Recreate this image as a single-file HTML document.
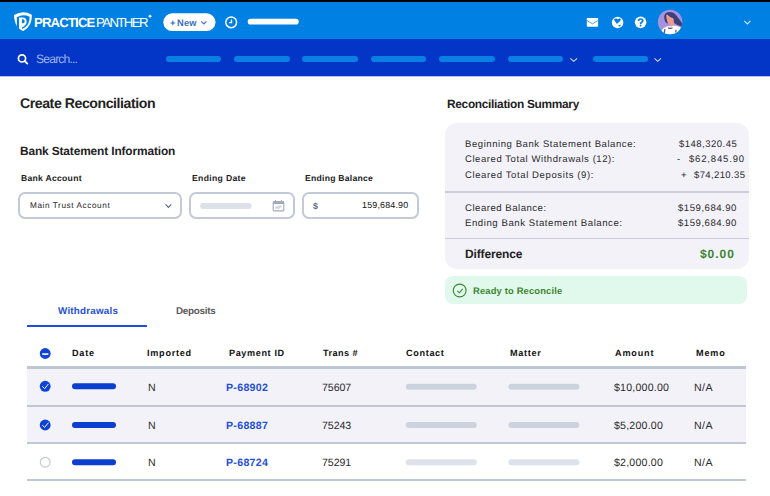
<!DOCTYPE html>
<html><head><meta charset="utf-8">
<style>
*{margin:0;padding:0;box-sizing:border-box}
html,body{width:770px;height:496px;overflow:hidden;background:#fff;font-family:"Liberation Sans",sans-serif;color:#222}
.abs{position:absolute}
.t{position:absolute;white-space:nowrap;line-height:1;text-rendering:geometricPrecision}
.pill{position:absolute;top:56px;height:6px;border-radius:3px;background:#0A80E4;width:55.5px}
.inp{position:absolute;top:192px;height:26.5px;border:2px solid #C3C9D7;border-radius:7px;background:#fff}
.bar{position:absolute;height:6px;border-radius:3px}
.rb{position:absolute;left:27px;width:719px}
</style></head><body>
<div class="abs" style="left:0;top:0;width:770px;height:1px;background:#000"></div>
<div class="abs" style="left:0;top:1px;width:770px;height:1px;background:#000"></div>
<div class="abs" style="left:0;top:2px;width:770px;height:37px;background:#0080E3"></div>
<div class="abs" style="left:0;top:39px;width:770px;height:37px;background:#0335C6"></div>
<div class="abs" style="left:0;top:76px;width:770px;height:1px;background:#B4C2EE"></div>

<svg class="abs" style="left:0;top:0" width="770" height="80" viewBox="0 0 770 80">
 <!-- logo -->
 <path d="M14 15.1 Q23 9.6 31.8 14.7 C32 20.5 30.5 27.3 23.1 31 C21.2 30.1 19.8 29.3 19 28.5 L16.6 26.2 C15 22.5 14 18.5 14 15.1 Z" fill="#fff"/>
 <path d="M16.8 17.2 Q23 13.6 29.6 16.7 C29.6 21.8 28.2 26 22.5 28.8 L19 28.8 L16.3 26.5 L16.9 24 Z" fill="#0080E3"/>
 <path d="M19 17.6 L22.6 17.6 C25.1 17.6 26.7 19.4 26.7 21.6 C26.7 24.2 24.6 26.6 21.9 27.4 L21.9 29.8 L19 28.4 Z M21.9 19.3 L22.9 19.3 C23.9 19.3 24.7 20.1 24.7 21.2 C24.7 22.4 23.9 23.3 22.9 23.3 L21.9 23.3 Z" fill="#fff" fill-rule="evenodd"/>
 <circle cx="150" cy="16.3" r="1.45" fill="#fff" opacity="0.85"/>
 <!-- new pill -->
 <rect x="163.3" y="13.3" width="52.2" height="17.8" rx="8.9" fill="#fff"/>
 <path d="M201.2 21.4 L203.85 24 L206.5 21.4" stroke="#3A6FC4" stroke-width="1.1" fill="none"/>
 <!-- clock -->
 <circle cx="231.2" cy="22.3" r="5.4" stroke="#fff" stroke-width="1.45" fill="none"/>
 <path d="M231.5 19.4 L231.5 22.7 L229.2 22.7" stroke="#fff" stroke-width="1.3" fill="none"/>
 <rect x="247.7" y="18.8" width="51" height="5.7" rx="2.85" fill="#fff"/>
 <!-- mail -->
 <rect x="586.8" y="18" width="11.3" height="8.7" rx="0.6" fill="#fff"/>
 <path d="M587 20.6 L592.45 23.8 L597.9 20.6" stroke="#4FA3EC" stroke-width="1" fill="none"/>
 <!-- globe -->
 <circle cx="617.6" cy="22.45" r="5.75" fill="#fff"/>
 <path d="M614.1 19.3 C614.6 18.3 616.1 18.1 617 18.8 L617.9 19.3 C618.5 18.5 619.7 18.1 620.4 18.8 C621.1 19.5 620.7 20.6 620 21.3 C619 22.3 617.8 23 616.9 23.9 C616 22.8 615.3 21.8 614.7 20.8 C614.3 20.2 614 19.8 614.1 19.3 Z" fill="#0080E3"/>
 <path d="M618.5 25.3 C619.2 24.6 620.4 24.6 621 25.1 C620.7 26 619.9 26.5 619 26.8 C618.7 26.3 618.4 25.8 618.5 25.3 Z" fill="#0080E3"/>
 <!-- help -->
 <circle cx="640.6" cy="22.35" r="5.8" fill="#fff"/>
 <path d="M638.55 21 C638.55 19.7 639.4 19 640.6 19 C641.9 19 642.75 19.8 642.75 20.8 C642.75 22.1 640.75 22.3 640.6 23.6 L640.6 24.1" stroke="#0080E3" stroke-width="1.7" fill="none"/>
 <circle cx="640.6" cy="25.5" r="0.95" fill="#0080E3"/>
 <!-- avatar -->
 <defs><clipPath id="ac"><circle cx="670.1" cy="22" r="12.25"/></clipPath></defs>
 <g clip-path="url(#ac)">
  <rect x="657" y="9" width="27" height="27" fill="#A593DD"/>
  <path d="M664.3 15.5 C665.5 12.8 667.5 12 669.5 12 C672 12 674.5 13 676 15 C677.5 17 679 19 680.8 21.2 C682.2 23 682.8 25 683 27 C681 26.5 679 25.8 677.5 25 C676 24.2 675 23.6 674.3 23 L673 19 C671 18.5 669 17.5 667.8 16.5 C667 19 667.5 21.5 667.6 23.5 C666.2 23 665.2 22 664.8 20.5 C664.3 19 664 17 664.3 15.5 Z" fill="#3F3F7D"/>
  <path d="M666.2 15.2 C666.8 14.5 667.6 14.6 668 15.3 C669.5 16.8 671.5 17.8 673.2 18.3 C673.8 19.5 673.8 21 673.3 22 C672.5 23.2 671.3 23.6 670.2 23.4 C668.8 23 667.8 22.2 667.3 21 C666.7 19.5 666.2 17 666.2 15.2 Z" fill="#EE9E88"/>
  <path d="M669.6 22.5 L673.5 21.8 L673.8 26.5 L669.8 26.8 Z" fill="#EE9E88"/>
  <path d="M660.5 36 C661 31 662 28.8 663.5 28.2 C665 27.3 666.8 26.5 668.5 26.1 C670 26.8 672.5 26.7 674 25.6 C676.5 26 679 26.7 680.5 27.4 C681.5 30 682 33 682 36 Z" fill="#fff"/>
  <path d="M667.9 27.3 C669.5 28 671 28 672.4 27.2 L672.4 28.6 C671 29.2 669.4 29.2 667.9 28.6 Z" fill="#3F3F7D"/>
  <path d="M664.9 29.2 L664.3 33" stroke="#50528A" stroke-width="1.3" fill="none"/>
  <path d="M676 29.7 L675.8 32.6" stroke="#50528A" stroke-width="1.2" fill="none"/>
 </g>
 <path d="M744.3 20.9 L747.35 24 L750.4 20.9" stroke="#D8E8FA" stroke-width="1.1" fill="none"/>
 <!-- nav -->
 <circle cx="22" cy="58.4" r="3.6" stroke="#fff" stroke-width="1.7" fill="none"/>
 <path d="M24.6 61 L27.3 63.6" stroke="#fff" stroke-width="1.8" stroke-linecap="round"/>
 <path d="M570.3 58.3 L573.7 61.3 L577.1 58.3" stroke="#D8E2F8" stroke-width="1.1" fill="none"/>
 <path d="M654.5 58.3 L657.7 61.3 L660.9 58.3" stroke="#D8E2F8" stroke-width="1.1" fill="none"/>
</svg>
<div class="pill" style="left:165.9px"></div>
<div class="pill" style="left:234px"></div>
<div class="pill" style="left:302.3px"></div>
<div class="pill" style="left:370.9px"></div>
<div class="pill" style="left:439px"></div>
<div class="pill" style="left:507.6px"></div>
<div class="pill" style="left:592.9px"></div>

<!-- inputs -->
<div class="inp" style="left:18.2px;width:163.8px"></div>
<div class="inp" style="left:189.4px;width:105.5px"></div>
<div class="inp" style="left:302.2px;width:116.5px"></div>
<svg class="abs" style="left:0;top:180px" width="440" height="50" viewBox="0 180 440 50">
 <path d="M165.6 204.4 L168.45 207.4 L171.3 204.4" stroke="#5C6479" stroke-width="1.1" fill="none"/>
 <rect x="200.1" y="202.9" width="51.6" height="6" rx="3" fill="#DDE1EA"/>
 <rect x="273.2" y="201.5" width="10.6" height="9.4" rx="1" stroke="#A3AABA" stroke-width="1.1" fill="none"/>
 <rect x="273.2" y="201.5" width="10.6" height="2.6" fill="#A3AABA"/>
 <path d="M275.5 200 V202 M281.5 200 V202" stroke="#A3AABA" stroke-width="1.1"/>
 <path d="M275.3 206.6 H279.8 V208.7 H275.3 Z M278.1 205.8 H281.6 V207.6 H278.1 Z" fill="#CDD2DC"/>
</svg>

<!-- summary -->
<div class="abs" style="left:445.2px;top:123px;width:303.6px;height:145.7px;border-radius:12px;background:#F3F2F9"></div>
<div class="abs" style="left:445.2px;top:190.7px;width:303.6px;height:2px;background:#CACDD9"></div>
<div class="abs" style="left:445.2px;top:237.5px;width:303.6px;height:1.8px;background:#CACDD9"></div>
<div class="abs" style="left:445.2px;top:276px;width:302.3px;height:28.3px;border-radius:8px;background:#E1F9EC"></div>
<svg class="abs" style="left:445px;top:276px" width="30" height="30" viewBox="445 276 30 30">
 <circle cx="459.7" cy="290.5" r="6.4" stroke="#3A862F" stroke-width="1.1" fill="none"/>
 <path d="M457.2 290.8 L459.4 292.8 L462.6 288.9" stroke="#3A862F" stroke-width="1.1" fill="none"/>
</svg>

<!-- tabs -->
<div class="abs" style="left:26.6px;top:324.6px;width:120.4px;height:2.3px;background:#1E4FD6"></div>

<!-- table -->
<div class="rb" style="top:365.6px;height:3.4px;background:#C1C6D3"></div>
<div class="rb" style="top:369px;height:36.5px;background:#F3F2F9"></div>
<div class="rb" style="top:405.2px;height:1.5px;background:#C1C6D3"></div>
<div class="rb" style="top:406.7px;height:36px;background:#F3F2F9"></div>
<div class="rb" style="top:442.4px;height:1.5px;background:#C1C6D3"></div>
<div class="rb" style="top:479.2px;height:1.5px;background:#C1C6D3"></div>

<svg class="abs" style="left:0;top:340px" width="770" height="156" viewBox="0 340 770 156">
 <circle cx="45.2" cy="353.5" r="5.45" fill="#0E43D8"/>
 <rect x="42.2" y="353.3" width="6.2" height="1.6" fill="#fff"/>
 <circle cx="45.2" cy="386.3" r="5.45" fill="#0E43D8"/>
 <path d="M42.4 386.4 L44.6 388.7 L48.4 384" stroke="#fff" stroke-width="0.95" fill="none"/>
 <circle cx="45.2" cy="425" r="5.45" fill="#0E43D8"/>
 <path d="M42.4 425.1 L44.6 427.4 L48.4 422.7" stroke="#fff" stroke-width="0.95" fill="none"/>
 <circle cx="45.2" cy="462.2" r="4.9" fill="#fff" stroke="#C5C9D3" stroke-width="1.2"/>
 <rect x="72" y="383.3" width="44" height="6" rx="3" fill="#0A3FD0"/>
 <rect x="72" y="422" width="44" height="6" rx="3" fill="#0A3FD0"/>
 <rect x="72" y="459.2" width="44" height="6" rx="3" fill="#0A3FD0"/>
 <rect x="405.8" y="383.8" width="71" height="6" rx="3" fill="#CDD3DE"/>
 <rect x="508.4" y="383.8" width="71" height="6" rx="3" fill="#CDD3DE"/>
 <rect x="405.8" y="422" width="71" height="6" rx="3" fill="#CDD3DE"/>
 <rect x="508.4" y="422" width="71" height="6" rx="3" fill="#CDD3DE"/>
 <rect x="405.8" y="459.2" width="71" height="6" rx="3" fill="#DDE2EA"/>
 <rect x="508.4" y="459.2" width="71" height="6" rx="3" fill="#DDE2EA"/>
</svg>

<div class="t" style="left:34px;top:16px;font-size:13.2px;font-weight:bold;color:#fff;letter-spacing:-0.86px;">PRACTICE</div>
<div class="t" style="left:96px;top:16px;font-size:13.2px;font-weight:normal;color:#fff;letter-spacing:-1.6px;">PANTHER</div>
<div class="t" style="left:177px;top:19px;font-size:9.3px;font-weight:bold;color:#3A6FC4;letter-spacing:0.2px;">New</div>
<div class="t" style="left:170px;top:19px;font-size:9.3px;font-weight:bold;color:#3A6FC4;letter-spacing:0.0px;">+</div>
<div class="t" style="left:36px;top:53px;font-size:12.2px;font-weight:normal;color:#9FB2EC;letter-spacing:-0.85px;">Search...</div>
<div class="t" style="left:20px;top:96px;font-size:14.1px;font-weight:bold;color:#222;letter-spacing:-0.43px;">Create Reconciliation</div>
<div class="t" style="left:20px;top:146px;font-size:11.9px;font-weight:bold;color:#222;letter-spacing:-0.13px;">Bank Statement Information</div>
<div class="t" style="left:447px;top:99px;font-size:11.9px;font-weight:bold;color:#222;letter-spacing:-0.31px;">Reconciliation Summary</div>
<div class="t" style="left:21px;top:174px;font-size:8.6px;font-weight:bold;color:#222;letter-spacing:0.28px;">Bank Account</div>
<div class="t" style="left:192px;top:174px;font-size:8.6px;font-weight:bold;color:#222;letter-spacing:0.34px;">Ending Date</div>
<div class="t" style="left:305px;top:174px;font-size:8.6px;font-weight:bold;color:#222;letter-spacing:0.26px;">Ending Balance</div>
<div class="t" style="left:30px;top:202px;font-size:8.2px;font-weight:normal;color:#1e1e1e;letter-spacing:0.59px;">Main Trust Account</div>
<div class="t" style="left:313px;top:202px;font-size:8.9px;font-weight:bold;color:#5F6C8C;letter-spacing:0.0px;">$</div>
<div class="t" style="left:362px;top:201px;font-size:8.9px;font-weight:normal;color:#111;letter-spacing:0.19px;">159,684.90</div>
<div class="t" style="left:465px;top:140px;font-size:9.5px;font-weight:normal;color:#2a2a2a;letter-spacing:0.58px;">Beginning Bank Statement Balance:</div>
<div class="t" style="left:465px;top:155px;font-size:9.5px;font-weight:normal;color:#2a2a2a;letter-spacing:0.57px;">Cleared Total Withdrawals (12):</div>
<div class="t" style="left:465px;top:171px;font-size:9.5px;font-weight:normal;color:#2a2a2a;letter-spacing:0.62px;">Cleared Total Deposits (9):</div>
<div class="t" style="left:679px;top:140px;font-size:9.5px;font-weight:normal;color:#2a2a2a;letter-spacing:0.49px;">$148,320.45</div>
<div class="t" style="left:677px;top:155px;font-size:9.5px;font-weight:normal;color:#2a2a2a;letter-spacing:0.0px;">-</div>
<div class="t" style="left:689px;top:155px;font-size:9.5px;font-weight:normal;color:#2a2a2a;letter-spacing:0.84px;">$62,845.90</div>
<div class="t" style="left:681px;top:171px;font-size:9.5px;font-weight:normal;color:#2a2a2a;letter-spacing:0.0px;">+</div>
<div class="t" style="left:694px;top:171px;font-size:9.5px;font-weight:normal;color:#2a2a2a;letter-spacing:0.38px;">$74,210.35</div>
<div class="t" style="left:465px;top:204px;font-size:9.6px;font-weight:normal;color:#2a2a2a;letter-spacing:0.5px;">Cleared Balance:</div>
<div class="t" style="left:465px;top:219px;font-size:9.6px;font-weight:normal;color:#2a2a2a;letter-spacing:0.56px;">Ending Bank Statement Balance:</div>
<div class="t" style="left:678px;top:204px;font-size:9.6px;font-weight:normal;color:#2a2a2a;letter-spacing:0.51px;">$159,684.90</div>
<div class="t" style="left:678px;top:219px;font-size:9.6px;font-weight:normal;color:#2a2a2a;letter-spacing:0.51px;">$159,684.90</div>
<div class="t" style="left:465px;top:248px;font-size:12px;font-weight:bold;color:#222;letter-spacing:-0.13px;">Difference</div>
<div class="t" style="left:700px;top:248px;font-size:12px;font-weight:bold;color:#3A862F;letter-spacing:0.95px;">$0.00</div>
<div class="t" style="left:473px;top:286px;font-size:9.4px;font-weight:bold;color:#3A862F;letter-spacing:0.16px;">Ready to Reconcile</div>
<div class="t" style="left:58px;top:307px;font-size:9.8px;font-weight:bold;color:#1E4FD6;letter-spacing:0.23px;">Withdrawals</div>
<div class="t" style="left:176px;top:307px;font-size:9.8px;font-weight:bold;color:#5a5a5a;letter-spacing:-0.23px;">Deposits</div>
<div class="t" style="left:72px;top:349px;font-size:9.1px;font-weight:bold;color:#111;letter-spacing:0.77px;">Date</div>
<div class="t" style="left:147px;top:349px;font-size:9.1px;font-weight:bold;color:#111;letter-spacing:0.74px;">Imported</div>
<div class="t" style="left:229px;top:349px;font-size:9.1px;font-weight:bold;color:#111;letter-spacing:0.62px;">Payment ID</div>
<div class="t" style="left:323px;top:349px;font-size:9.1px;font-weight:bold;color:#111;letter-spacing:0.45px;">Trans #</div>
<div class="t" style="left:406px;top:349px;font-size:9.1px;font-weight:bold;color:#111;letter-spacing:0.67px;">Contact</div>
<div class="t" style="left:510px;top:349px;font-size:9.1px;font-weight:bold;color:#111;letter-spacing:0.68px;">Matter</div>
<div class="t" style="left:615px;top:349px;font-size:9.1px;font-weight:bold;color:#111;letter-spacing:0.84px;">Amount</div>
<div class="t" style="left:696px;top:349px;font-size:9.1px;font-weight:bold;color:#111;letter-spacing:0.87px;">Memo</div>
<div class="t" style="left:148px;top:383px;font-size:10.6px;font-weight:normal;color:#2a2a2a;letter-spacing:0.0px;">N</div>
<div class="t" style="left:226px;top:383px;font-size:10.6px;font-weight:bold;color:#1E4FD6;letter-spacing:0.3px;">P-68902</div>
<div class="t" style="left:322px;top:383px;font-size:10.6px;font-weight:normal;color:#2a2a2a;letter-spacing:-0.05px;">75607</div>
<div class="t" style="left:614px;top:383px;font-size:10.6px;font-weight:normal;color:#2a2a2a;letter-spacing:0.21px;">$10,000.00</div>
<div class="t" style="left:694px;top:383px;font-size:10.6px;font-weight:normal;color:#2a2a2a;letter-spacing:0.4px;">N/A</div>
<div class="t" style="left:148px;top:421px;font-size:10.6px;font-weight:normal;color:#2a2a2a;letter-spacing:0.0px;">N</div>
<div class="t" style="left:226px;top:421px;font-size:10.6px;font-weight:bold;color:#1E4FD6;letter-spacing:0.3px;">P-68887</div>
<div class="t" style="left:322px;top:421px;font-size:10.6px;font-weight:normal;color:#2a2a2a;letter-spacing:-0.05px;">75243</div>
<div class="t" style="left:614px;top:421px;font-size:10.6px;font-weight:normal;color:#2a2a2a;letter-spacing:0.21px;">$5,200.00</div>
<div class="t" style="left:694px;top:421px;font-size:10.6px;font-weight:normal;color:#2a2a2a;letter-spacing:0.4px;">N/A</div>
<div class="t" style="left:148px;top:458px;font-size:10.6px;font-weight:normal;color:#2a2a2a;letter-spacing:0.0px;">N</div>
<div class="t" style="left:226px;top:458px;font-size:10.6px;font-weight:bold;color:#1E4FD6;letter-spacing:0.3px;">P-68724</div>
<div class="t" style="left:322px;top:458px;font-size:10.6px;font-weight:normal;color:#2a2a2a;letter-spacing:-0.05px;">75291</div>
<div class="t" style="left:614px;top:458px;font-size:10.6px;font-weight:normal;color:#2a2a2a;letter-spacing:0.21px;">$2,000.00</div>
<div class="t" style="left:694px;top:458px;font-size:10.6px;font-weight:normal;color:#2a2a2a;letter-spacing:0.4px;">N/A</div>
</body></html>
